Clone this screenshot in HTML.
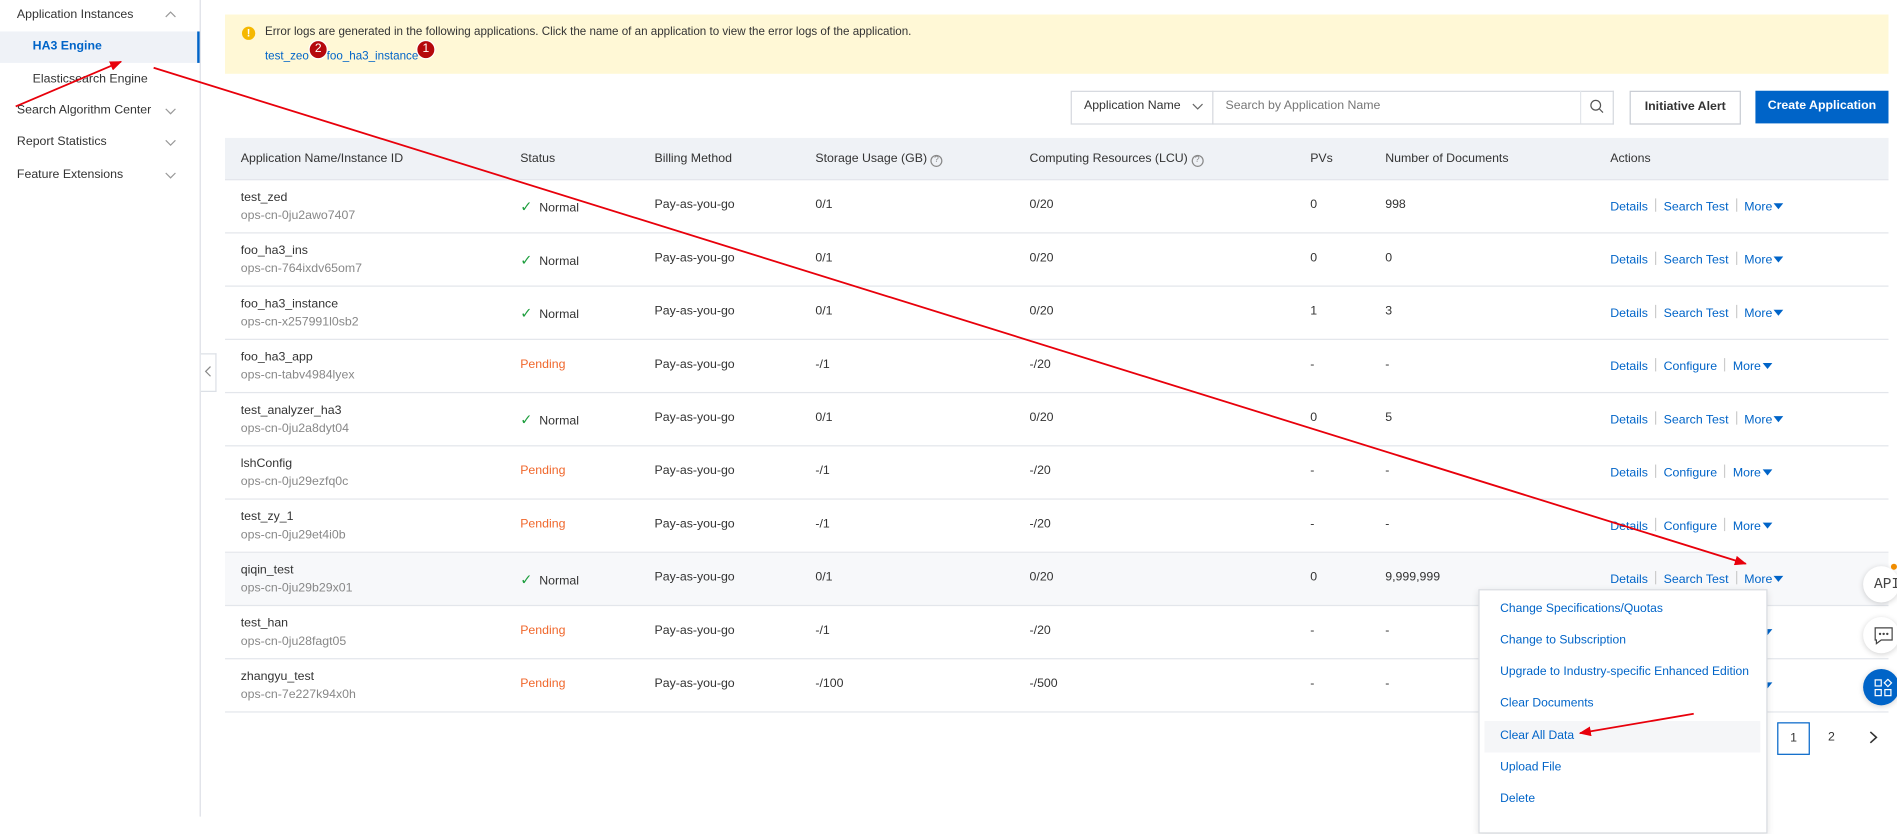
<!DOCTYPE html>
<html><head><meta charset="utf-8"><style>
html,body{margin:0;padding:0;width:1897px;height:816px;overflow:hidden;background:#fff}
#w{position:absolute;left:0;top:0;width:1568px;height:675px;transform:scale(1.2098);transform-origin:0 0;font-family:"Liberation Sans",sans-serif;font-size:10.2px;color:#333}
.a{position:absolute;white-space:nowrap}
.side{position:absolute;left:0;top:0;width:165px;height:675px;border-right:1px solid #dcdfe6}
.lnk{color:#0064c8}
.g{color:#888}
.pend{color:#f0672c}
.row{position:absolute;left:186px;width:1375px;height:43px;border-bottom:1px solid #e3e6eb}
.sep{display:inline-block;width:1px;height:11px;background:#ccc;margin:0 6px;vertical-align:-1px}
.tri{display:inline-block;width:0;height:0;border-left:4px solid transparent;border-right:4px solid transparent;border-top:5px solid #0064c8;vertical-align:1px;margin-left:1px}
.mi{position:absolute;left:17px;color:#0064c8;font-size:10px}
.circ{position:absolute;left:1540px;width:30px;height:30px;border-radius:50%;background:#fff;box-shadow:0 1px 5px rgba(0,0,0,.18)}
</style></head><body><div id="w">
<div class="side">
<div class="a" style="left:14px;top:7px">Application Instances</div>
<svg class="a" style="left:136px;top:9px" width="10" height="6"><path d="M1 5L5 1L9 5" stroke="#999" fill="none"/></svg>
<div class="a" style="left:0;top:26px;width:163px;height:26px;background:#eff2f7;border-right:2px solid #0064c8"></div>
<div class="a" style="left:27px;top:33px;color:#0064c8;font-weight:bold">HA3 Engine</div>
<div class="a" style="left:27px;top:60px">Elasticsearch Engine</div>
<div class="a" style="left:14px;top:86px">Search Algorithm Center</div>
<div class="a" style="left:14px;top:112px">Report Statistics</div>
<div class="a" style="left:14px;top:139px">Feature Extensions</div>
<svg class="a" style="left:136px;top:89px" width="10" height="60"><path d="M1 1L5 5L9 1M1 27L5 31L9 27M1 54L5 58L9 54" stroke="#999" fill="none"/></svg>
</div>
<div class="a" style="left:166px;top:292px;width:12px;height:30px;background:#fff;border:1px solid #dcdfe6;border-left:none"></div>
<svg class="a" style="left:169px;top:302px" width="6" height="10"><path d="M5 1L1 5L5 9" stroke="#888" fill="none"/></svg>

<div class="a" style="left:186px;top:12px;width:1375px;height:49px;background:#fff8d6"></div>
<div class="a" style="left:200px;top:22px;width:11px;height:11px;border-radius:50%;background:#f5b800;color:#fff;font-size:9px;font-weight:bold;text-align:center;line-height:11px">!</div>
<div class="a" style="left:219px;top:21px;font-size:9.6px">Error logs are generated in the following applications. Click the name of an application to view the error logs of the application.</div>
<div class="a lnk" style="left:219px;top:41px;font-size:9.6px">test_zeo</div>
<div class="a lnk" style="left:270px;top:41px;font-size:9.6px">foo_ha3_instance</div>
<div class="a" style="left:255px;top:33px;width:14px;height:14px;border-radius:50%;background:#b5080c;color:#fff;font-size:10px;text-align:center;line-height:14px;border:1px solid #fff">2</div>
<div class="a" style="left:344px;top:33px;width:14px;height:14px;border-radius:50%;background:#b5080c;color:#fff;font-size:10px;text-align:center;line-height:14px;border:1px solid #fff">1</div>

<div class="a" style="left:885px;top:75px;width:116px;height:26px;border:1px solid #d5d8de"></div>
<div class="a" style="left:896px;top:82px;color:#333">Application Name</div>
<svg class="a" style="left:985px;top:85px" width="10" height="6"><path d="M1 1L5 5L9 1" stroke="#666" fill="none"/></svg>
<div class="a" style="left:1002px;top:75px;width:331px;height:26px;border:1px solid #d5d8de;border-left:none"></div>
<div class="a" style="left:1306px;top:75px;width:1px;height:27px;background:#e3e6eb"></div>
<div class="a g" style="left:1013px;top:82px;color:#777">Search by Application Name</div>
<svg class="a" style="left:1314px;top:82px" width="12" height="12"><circle cx="5" cy="5" r="4" stroke="#555" fill="none"/><path d="M8 8L11 11" stroke="#555"/></svg>
<div class="a" style="left:1347px;top:75px;width:90px;height:26px;border:1px solid #c8ccd3;text-align:center;line-height:26px;font-weight:bold;color:#333">Initiative Alert</div>
<div class="a" style="left:1451px;top:75px;width:110px;height:27px;background:#0064c8;color:#fff;font-weight:bold;text-align:center;line-height:25px">Create Application</div>

<div class="a" style="left:186px;top:114px;width:1375px;height:34px;background:#eff2f6;border-bottom:1px solid #e3e6eb"></div>
<div class="a" style="left:199px;top:126px">Application Name/Instance ID</div>
<div class="a" style="left:430px;top:126px">Status</div>
<div class="a" style="left:541px;top:126px">Billing Method</div>
<div class="a" style="left:674px;top:126px">Storage Usage (GB) <span style="display:inline-block;width:8px;height:8px;border:1px solid #888;border-radius:50%;font-size:7px;line-height:8px;text-align:center;color:#888">?</span></div>
<div class="a" style="left:851px;top:126px">Computing Resources (LCU) <span style="display:inline-block;width:8px;height:8px;border:1px solid #888;border-radius:50%;font-size:7px;line-height:8px;text-align:center;color:#888">?</span></div>
<div class="a" style="left:1083px;top:126px">PVs</div>
<div class="a" style="left:1145px;top:126px">Number of Documents</div>
<div class="a" style="left:1331px;top:126px">Actions</div>

<div id="rows"></div>
<script>
var R=[["test_zed","ops-cn-0ju2awo7407",1,"0/1","0/20","0","998",1],
["foo_ha3_ins","ops-cn-764ixdv65om7",1,"0/1","0/20","0","0",1],
["foo_ha3_instance","ops-cn-x257991l0sb2",1,"0/1","0/20","1","3",1],
["foo_ha3_app","ops-cn-tabv4984lyex",0,"-/1","-/20","-","-",0],
["test_analyzer_ha3","ops-cn-0ju2a8dyt04",1,"0/1","0/20","0","5",1],
["lshConfig","ops-cn-0ju29ezfq0c",0,"-/1","-/20","-","-",0],
["test_zy_1","ops-cn-0ju29et4i0b",0,"-/1","-/20","-","-",0],
["qiqin_test","ops-cn-0ju29b29x01",1,"0/1","0/20","0","9,999,999",1],
["test_han","ops-cn-0ju28fagt05",0,"-/1","-/20","-","-",0],
["zhangyu_test","ops-cn-7e227k94x0h",0,"-/100","-/500","-","-",0]];
var h="";
R.forEach(function(r,i){var t=149+i*44;var c=t+21;
h+='<div class="row" style="top:'+t+'px;'+(i==7?'background:#f7f8fa':'')+'"></div>';
h+='<div class="a" style="left:199px;top:'+(t+9)+'px">'+r[0]+'</div><div class="a g" style="left:199px;top:'+(t+24)+'px">'+r[1]+'</div>';
h+=r[2]?'<div class="a" style="left:430px;top:'+(c-6)+'px"><span style="color:#1e9e3e;font-size:12px">&#10003;</span>&nbsp; Normal</div>':'<div class="a pend" style="left:430px;top:'+(c-6)+'px">Pending</div>';
h+='<div class="a" style="left:541px;top:'+(c-6)+'px">Pay-as-you-go</div>';
h+='<div class="a" style="left:674px;top:'+(c-6)+'px">'+r[3]+'</div><div class="a" style="left:851px;top:'+(c-6)+'px">'+r[4]+'</div>';
h+='<div class="a" style="left:1083px;top:'+(c-6)+'px">'+r[5]+'</div><div class="a" style="left:1145px;top:'+(c-6)+'px">'+r[6]+'</div>';
h+='<div class="a lnk" style="left:1331px;top:'+(c-6)+'px">Details<span class="sep"></span>'+(r[7]?'Search Test':'Configure')+'<span class="sep"></span>More<span class="tri"></span></div>';
});
document.getElementById("rows").innerHTML=h;
</script>

<div class="a" style="left:1469px;top:597px;width:25px;height:25px;border:1px solid #0064c8;text-align:center;line-height:25px">1</div>
<div class="a" style="left:1511px;top:604px">2</div>
<svg class="a" style="left:1545px;top:604px" width="7" height="11"><path d="M1 1L6 5.5L1 10" stroke="#333" fill="none" stroke-width="1.3"/></svg>

<div class="a" style="left:1222px;top:487px;width:237px;height:200px;background:#fff;border:1px solid #d8dbe0;box-shadow:0 2px 6px rgba(0,0,0,.12)">
<div class="a" style="left:4px;top:108px;width:228px;height:26px;background:#f5f6f8"></div>
<div class="mi" style="top:10px">Change Specifications/Quotas</div>
<div class="mi" style="top:36px">Change to Subscription</div>
<div class="mi" style="top:62px">Upgrade to Industry-specific Enhanced Edition</div>
<div class="mi" style="top:88px">Clear Documents</div>
<div class="mi" style="top:115px">Clear All Data</div>
<div class="mi" style="top:141px">Upload File</div>
<div class="mi" style="top:167px">Delete</div>
</div>

<div class="circ" style="top:468px"><div class="a" style="left:9px;top:8px;font-size:12px;color:#444;font-family:'Liberation Mono',monospace">API</div></div>
<div class="a" style="left:1563px;top:466px;width:5px;height:5px;border-radius:50%;background:#f08c00"></div>
<div class="circ" style="top:510px"><svg class="a" style="left:9px;top:8px" width="16" height="15"><path d="M1 1H15V11H6L2 14V11H1Z" stroke="#444" fill="none"/><circle cx="5" cy="6" r="1" fill="#444"/><circle cx="8" cy="6" r="1" fill="#444"/><circle cx="11" cy="6" r="1" fill="#444"/></svg></div>
<div class="circ" style="top:553px;background:#0064c8"><svg class="a" style="left:9px;top:8px" width="16" height="15"><rect x="1" y="1" width="5" height="5" stroke="#fff" fill="none"/><rect x="1" y="9" width="5" height="5" stroke="#fff" fill="none"/><rect x="9" y="9" width="5" height="5" stroke="#fff" fill="none"/><path d="M11.5 0.5L14.5 3.5L11.5 6.5L8.5 3.5Z" stroke="#fff" fill="none"/></svg></div>

<svg class="a" style="left:0;top:0" width="1568" height="675">
<defs><marker id="m" markerWidth="10" markerHeight="8" refX="9" refY="4" orient="auto" markerUnits="userSpaceOnUse"><path d="M0 0L10 4L0 8Z" fill="#e8000b"/></marker></defs>
<g stroke="#e8000b" stroke-width="1.5" fill="none">
<path d="M127 56L1443 466" marker-end="url(#m)"/>
<path d="M13 88L100 51" marker-end="url(#m)"/>
<path d="M1400 590L1306 606" marker-end="url(#m)"/>
</g></svg>
</div></body></html>
